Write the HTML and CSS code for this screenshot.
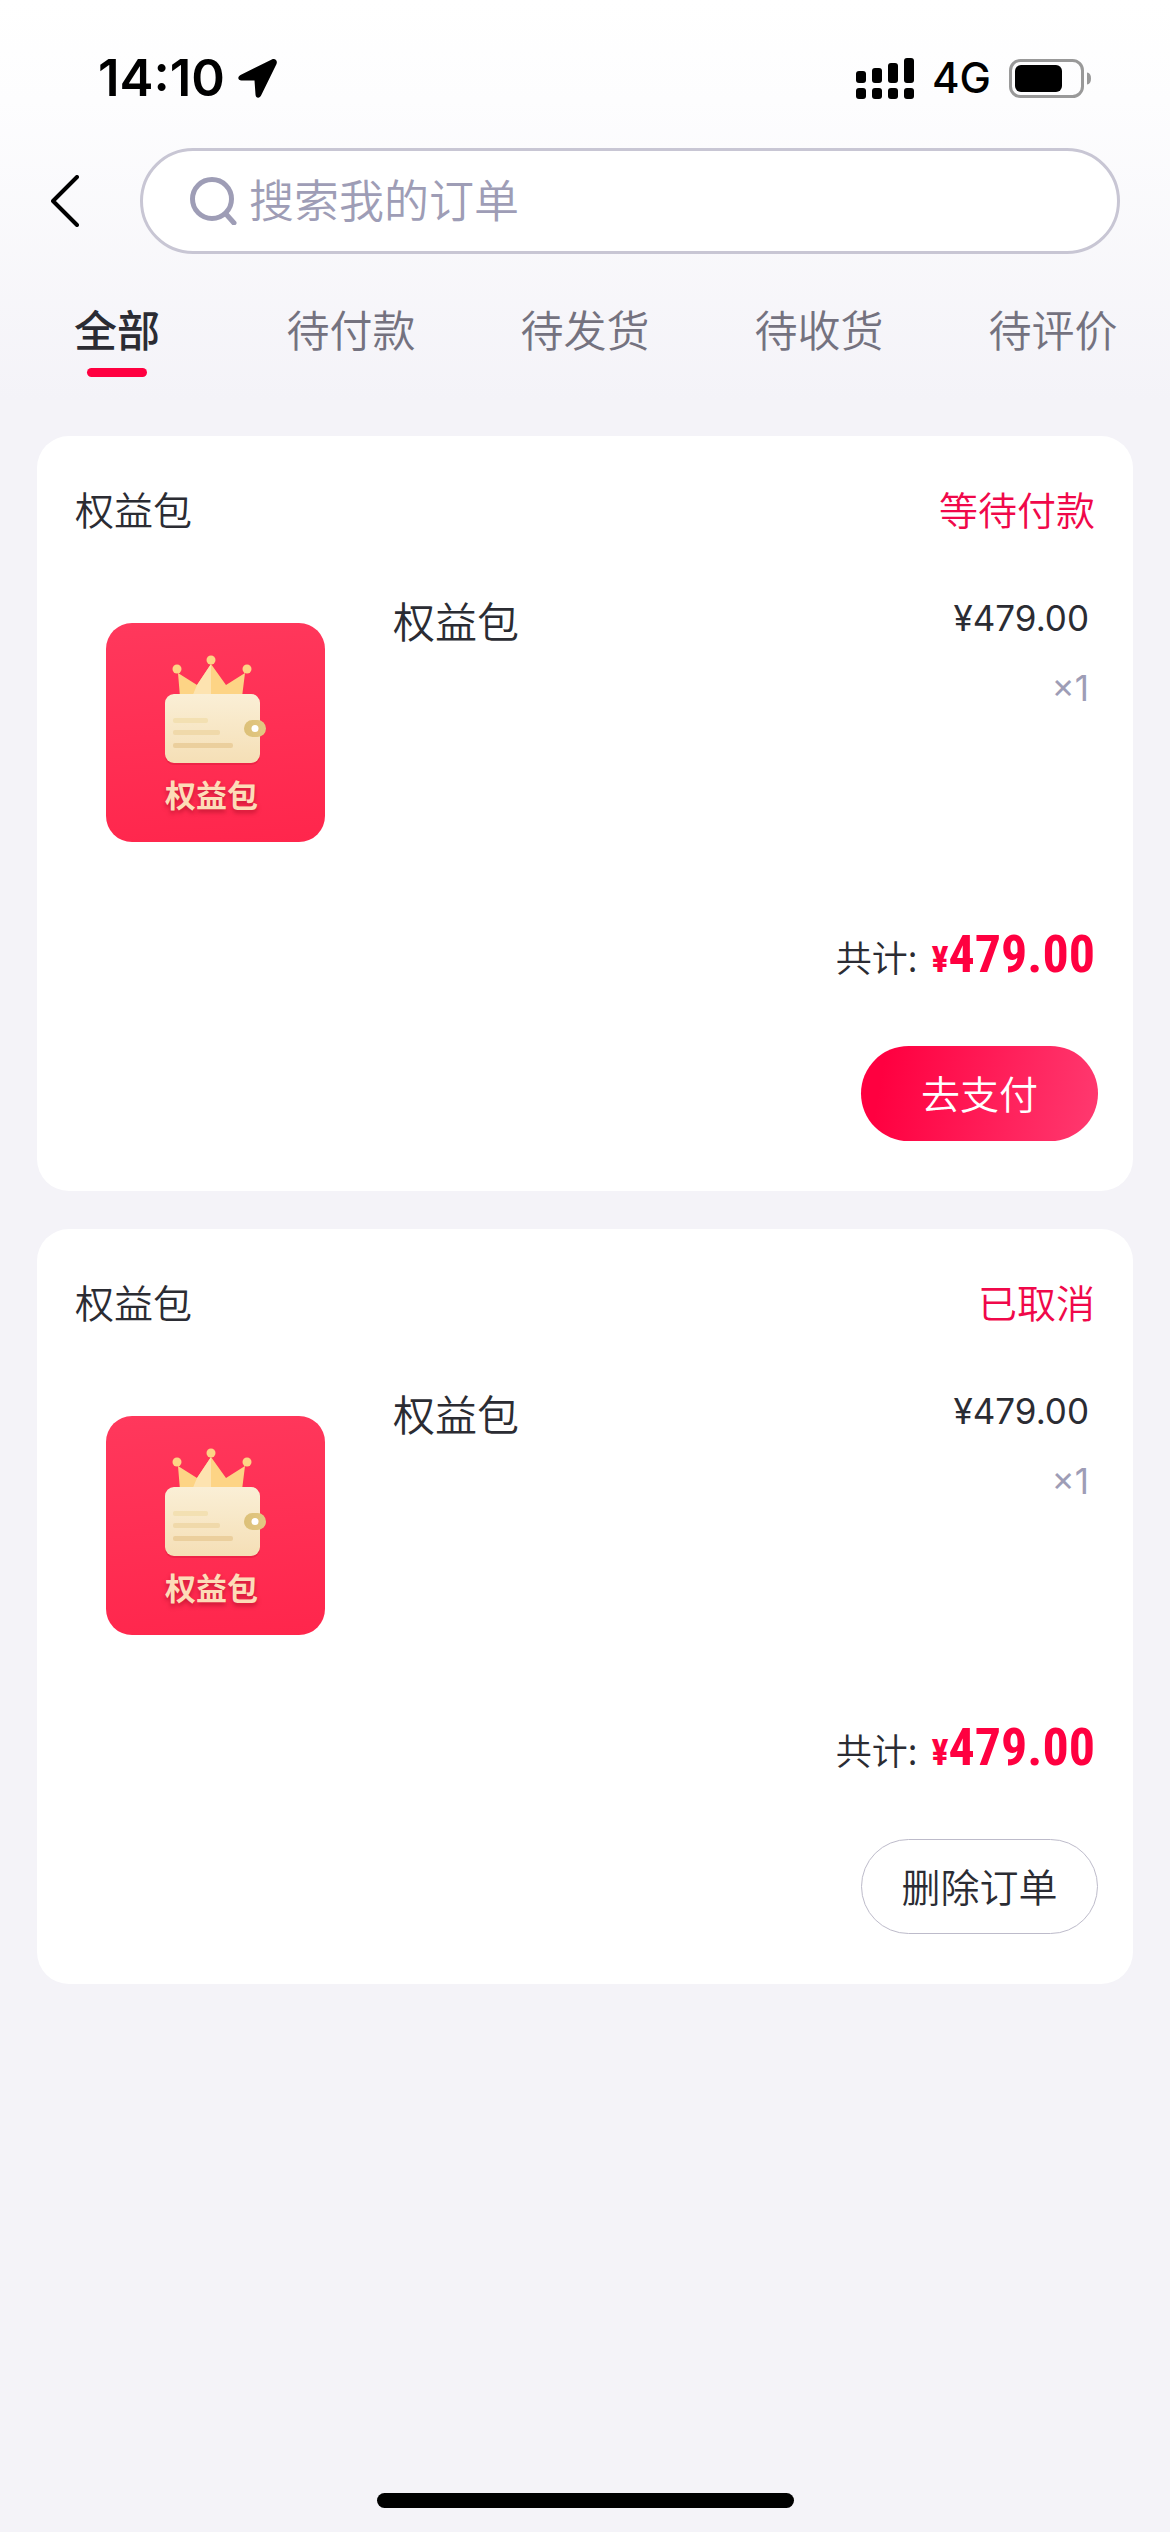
FILE: index.html
```html
<!DOCTYPE html>
<html lang="zh-CN">
<head>
<meta charset="utf-8">
<meta name="viewport" content="width=device-width, initial-scale=1">
<title>我的订单</title>
<link rel="stylesheet" href="styles.css">
</head>
<body>
<svg class="sprite" width="0" height="0" aria-hidden="true">
  <defs>
    <linearGradient id="wallet-fill" x1="0" y1="0" x2="0" y2="1">
      <stop offset="0" stop-color="#faefd6"/>
      <stop offset="1" stop-color="#f5dfb6"/>
    </linearGradient>
    <linearGradient id="clasp-fill" x1="0" y1="0" x2="1" y2="0">
      <stop offset="0" stop-color="#dcc078"/>
      <stop offset="1" stop-color="#e3c883"/>
    </linearGradient>
  </defs>
  <symbol id="wallet" viewBox="0 0 219 150">
    <path d="M72 50 91 62 105 41 120 62 139 50 136 74H74Z" fill="#fdd485"/>
    <path d="M105 41V74H86L91 62Z" fill="#fde3b0"/>
    <g fill="#fdd485">
      <circle cx="71" cy="46" r="4.5"/>
      <circle cx="105" cy="37" r="4.5"/>
      <circle cx="141" cy="46" r="4.5"/>
    </g>
    <rect x="59" y="74" width="95" height="68" rx="9" fill="#c8102f" opacity=".3"/>
    <rect x="59" y="71" width="95" height="69" rx="9" fill="url(#wallet-fill)"/>
    <rect x="67" y="95" width="35" height="5" rx="2" fill="#f3e0b2"/>
    <rect x="67" y="107" width="47" height="5" rx="2" fill="#f0d9aa"/>
    <rect x="67" y="120" width="60" height="5" rx="2" fill="#ebcf9d"/>
    <rect x="138" y="97" width="22" height="17" rx="8.5" fill="url(#clasp-fill)"/>
    <circle cx="149" cy="105.500" r="3.500" fill="#fff"/>
  </symbol>
</svg>

<header class="top">
  <div class="status-bar">
    <div class="status-left">
      <span class="clock">14:10</span>
      <svg class="location" viewBox="0 0 39 39" aria-hidden="true">
        <path d="M33.800 .5 2.500 16C-1 18 0 21.300 3.500 21.400L16.500 21.600 17.500 35.500C17.700 39.300 21.600 40 23.200 36.300L38.500 5C39.800 1.800 37.300-1 33.800 .5Z"/>
      </svg>
    </div>
    <div class="status-right">
      <svg class="signal" viewBox="0 0 58 41" aria-hidden="true">
        <rect x="0" y="13" width="10" height="12" rx="3"/>
        <rect x="16" y="10" width="10" height="15" rx="3"/>
        <rect x="32" y="5" width="10" height="20" rx="3"/>
        <rect x="48" y="0" width="10" height="25" rx="3"/>
        <rect x="0" y="30" width="10" height="11" rx="3"/>
        <rect x="16" y="30" width="10" height="11" rx="3"/>
        <rect x="32" y="30" width="10" height="11" rx="3"/>
        <rect x="48" y="30" width="10" height="11" rx="3"/>
      </svg>
      <span class="network">4G</span>
      <svg class="battery" viewBox="0 0 82 39" aria-hidden="true">
        <rect x="1.500" y="1.500" width="72" height="36" rx="10" fill="none" stroke="#999" stroke-width="3"/>
        <rect x="6" y="6" width="47" height="27" rx="6"/>
        <path d="M78 13.500Q82 14 82 19.500T78 25.500Z" fill="#999"/>
      </svg>
    </div>
  </div>

  <form class="search-row" role="search">
    <button class="back" type="button" aria-label="返回">
      <svg viewBox="0 0 28 52" aria-hidden="true"><path d="M26 2 2 26 26 50"/></svg>
    </button>
    <label class="search-box">
      <svg viewBox="0 0 48 48" role="img" aria-label="搜索"><circle cx="22" cy="22" r="19.500"/><path d="M36 37 44 46"/></svg>
      <input type="search" placeholder="搜索我的订单">
    </label>
  </form>

  <nav class="tabs">
    <a class="tab active" href="#all" aria-current="page">全部</a>
    <a class="tab" href="#unpaid">待付款</a>
    <a class="tab" href="#unshipped">待发货</a>
    <a class="tab" href="#shipped">待收货</a>
    <a class="tab" href="#review">待评价</a>
  </nav>
</header>

<main class="orders">
  <article class="order">
    <div class="order-head">
      <h2 class="shop">权益包</h2>
      <span class="state">等待付款</span>
    </div>
    <div class="item">
      <div class="thumb-frame">
        <div class="thumb">
          <svg viewBox="0 0 219 150" aria-hidden="true"><use href="#wallet"/></svg>
          <span class="thumb-text">权益包</span>
        </div>
      </div>
      <h3 class="item-name">权益包</h3>
      <div class="item-side">
        <span class="price">¥479.00</span>
        <span class="count">×1</span>
      </div>
    </div>
    <div class="total">
      <span class="total-label">共计:</span>
      <span class="total-price"><small>¥</small>479.00</span>
    </div>
    <div class="actions">
      <button class="btn primary" type="button">去支付</button>
    </div>
  </article>

  <article class="order">
    <div class="order-head">
      <h2 class="shop">权益包</h2>
      <span class="state">已取消</span>
    </div>
    <div class="item">
      <div class="thumb-frame">
        <div class="thumb">
          <svg viewBox="0 0 219 150" aria-hidden="true"><use href="#wallet"/></svg>
          <span class="thumb-text">权益包</span>
        </div>
      </div>
      <h3 class="item-name">权益包</h3>
      <div class="item-side">
        <span class="price">¥479.00</span>
        <span class="count">×1</span>
      </div>
    </div>
    <div class="total">
      <span class="total-label">共计:</span>
      <span class="total-price"><small>¥</small>479.00</span>
    </div>
    <div class="actions">
      <button class="btn" type="button">删除订单</button>
    </div>
  </article>
</main>

<div class="home-indicator"></div>
</body>
</html>
```
FILE: styles.css
```css
:root {
  --red: #ff0040;
  --state: #f0084a;
  --ink: #2b2c33;
  --muted: #74727f;
  --faint: #9e9db6;
  --line: #c8c6d4;
  --page: #f4f3f8;
  --sans: Inter, "Noto Sans CJK SC", sans-serif;
  --cjk: "Noto Sans CJK SC", sans-serif;
}

* {
  box-sizing: border-box;
}

body {
  margin: 0;
  min-height: 100vh;
  display: flex;
  flex-direction: column;
  background: linear-gradient(#fff 0, #fdfdfe 100px, var(--page) 400px) var(--page);
  color: var(--ink);
  font-family: var(--cjk);
}

h2,
h3 {
  margin: 0;
  font-weight: 350;
}

button,
input {
  font-family: inherit;
  color: inherit;
}

.sprite {
  position: absolute;
}

/* Status bar */
.status-bar {
  display: flex;
  justify-content: space-between;
  align-items: center;
  height: 148px;
  padding: 8px 79px 0 98px;
  color: #000;
  font-family: var(--sans);
}

.status-left,
.status-right {
  display: flex;
  align-items: center;
}

.status-left {
  gap: 13px;
}

.clock {
  font-size: 51px;
  font-weight: 600;
  line-height: 60px;
}

.location {
  width: 39px;
  height: 39px;
}

.signal {
  width: 58px;
  height: 41px;
}

.network {
  margin: 0 18px;
  font-size: 42px;
  font-weight: 500;
  line-height: 60px;
}

.battery {
  width: 82px;
  height: 39px;
}

/* Search */
.search-row {
  display: flex;
  align-items: center;
  margin: 0;
  padding-right: 50px;
}

.back {
  width: 140px;
  height: 106px;
  padding: 0 0 0 51px;
  border: 0;
  background: none;
  text-align: left;
}

.back svg {
  display: block;
  width: 28px;
  height: 52px;
}

.back path {
  fill: none;
  stroke: #000;
  stroke-width: 4;
  stroke-linecap: round;
  stroke-linejoin: round;
}

.search-box {
  flex: 1;
  display: flex;
  align-items: center;
  gap: 11px;
  height: 106px;
  padding: 0 48px 0 47px;
  border: 3px solid var(--line);
  border-radius: 53px;
  background: #fff;
}

.search-box svg {
  width: 48px;
  height: 48px;
  fill: none;
  stroke: var(--faint);
  stroke-width: 5;
  stroke-linecap: round;
}

.search-box input {
  flex: 1;
  min-width: 0;
  padding: 0 0 4px;
  border: 0;
  outline: 0;
  background: none;
  font-size: 45px;
  font-weight: 350;
  line-height: 60px;
  appearance: none;
}

.search-box input::placeholder {
  color: var(--faint);
  opacity: 1;
}

/* Tabs */
.tabs {
  display: grid;
  grid-template-columns: repeat(5, 1fr);
  padding: 44px 0 59px;
}

.tab {
  display: flex;
  flex-direction: column;
  align-items: center;
  gap: 10px;
  color: var(--muted);
  font-size: 43px;
  font-weight: 350;
  line-height: 60px;
  text-decoration: none;
  white-space: nowrap;
}

.tab::after {
  content: "";
  width: 60px;
  height: 9px;
  border-radius: 5px;
}

.tab.active {
  color: var(--ink);
  font-weight: 500;
}

.tab.active::after {
  background: var(--red);
}

/* Orders */
.orders {
  display: flex;
  flex-direction: column;
  gap: 38px;
  padding: 0 37px;
}

.order {
  padding: 44px 35px 50px 38px;
  border-radius: 32px;
  background: #fff;
}

.order-head {
  display: flex;
  justify-content: space-between;
  padding-right: 3px;
  font-size: 39px;
  line-height: 56px;
}

.shop {
  font-size: 39px;
}

.state {
  color: var(--state);
  font-weight: 350;
}

.item {
  display: flex;
  gap: 37px;
  margin-top: 56px;
  padding-right: 9px;
}

.thumb-frame {
  padding: 31px;
}

.thumb {
  display: flex;
  flex-direction: column;
  width: 219px;
  height: 219px;
  border-radius: 26px;
  background: linear-gradient(175deg, #ff385c, #ff264c);
}

.thumb svg {
  display: block;
  width: 219px;
  height: 150px;
}

.thumb-text {
  padding-right: 8px;
  color: #fddcb8;
  font-size: 31px;
  font-weight: 700;
  line-height: 42px;
  text-align: center;
  text-shadow: 0 3px 4px rgba(150, 10, 30, .5);
}

.item-name {
  flex: 1;
  font-size: 42px;
  line-height: 56px;
}

.item-side {
  display: flex;
  flex-direction: column;
  align-items: flex-end;
  gap: 18px;
  font-family: var(--sans);
  font-size: 35px;
  line-height: 52px;
}

.count {
  color: var(--faint);
}

.total {
  display: flex;
  justify-content: flex-end;
  align-items: baseline;
  gap: 14px;
  margin-top: 52px;
  padding-right: 3px;
  line-height: 60px;
}

.total-label {
  font-size: 36px;
  font-weight: 350;
}

.total-price {
  color: var(--red);
  font-family: "Roboto Condensed", Roboto, sans-serif;
  font-size: 52px;
  font-weight: 700;
}

.total-price small {
  font-size: 36px;
}

.actions {
  display: flex;
  justify-content: flex-end;
  margin-top: 56px;
}

.btn {
  width: 237px;
  height: 95px;
  padding: 0 0 4px;
  border: 1px solid #bdbbca;
  border-radius: 48px;
  background: #fff;
  font-size: 39px;
  font-weight: 350;
  line-height: 60px;
}

.btn.primary {
  border: 0;
  background: linear-gradient(100deg, #ff0040 10%, #ff3a70);
  color: #fff;
}

.home-indicator {
  width: 417px;
  height: 15px;
  margin: auto auto 24px;
  border-radius: 8px;
  background: #000;
}
```
